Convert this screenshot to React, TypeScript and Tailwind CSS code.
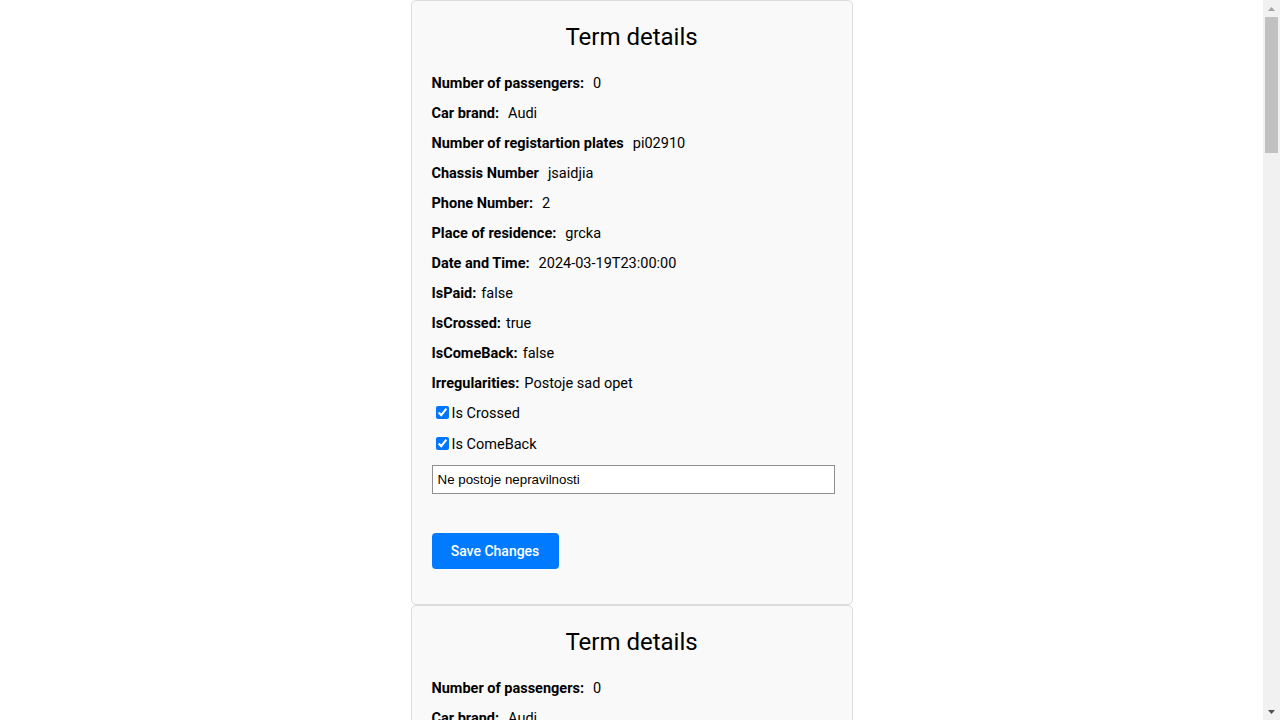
import React from 'react';

type Term = {
  passengers: number;
  brand: string;
  plates: string;
  chassis: string;
  phone: string;
  residence: string;
  dateTime: string;
  isPaid: boolean;
  isCrossed: boolean;
  isComeBack: boolean;
  irregularities: string;
};

const terms: Term[] = Array.from({ length: 8 }, () => ({
  passengers: 0,
  brand: 'Audi',
  plates: 'pi02910',
  chassis: 'jsaidjia',
  phone: '2',
  residence: 'grcka',
  dateTime: '2024-03-19T23:00:00',
  isPaid: false,
  isCrossed: true,
  isComeBack: false,
  irregularities: 'Postoje sad opet',
}));

function Row({ label, value, tight }: { label: string; value: string; tight?: boolean }) {
  return (
    <p className="flex items-center h-[20px] mt-[10px] first-of-type:mt-[21px] text-[14.5px] leading-[20px] whitespace-nowrap">
      <strong className="font-bold">{label}</strong>
      <span className={tight ? 'ml-[5px]' : 'ml-[9px]'}>{value}</span>
    </p>
  );
}

function TermCard({ term }: { term: Term }) {
  return (
    <div className="w-[442px] shrink-0 mx-auto flex flex-col items-start bg-[#f9f9f9] border border-[#dcdcdc] rounded-[5px] px-[20px] pt-[20px] pb-[35px]">
      <h2 className="self-stretch text-[24px] leading-[32px] text-center text-black">Term details</h2>
      <Row label="Number of passengers:" value={String(term.passengers)} />
      <Row label="Car brand:" value={term.brand} />
      <Row label="Number of registartion plates" value={term.plates} />
      <Row label="Chassis Number" value={term.chassis} />
      <Row label="Phone Number:" value={term.phone} />
      <Row label="Place of residence:" value={term.residence} />
      <Row label="Date and Time:" value={term.dateTime} />
      <Row label="IsPaid:" value={String(term.isPaid)} tight />
      <Row label="IsCrossed:" value={String(term.isCrossed)} tight />
      <Row label="IsComeBack:" value={String(term.isComeBack)} tight />
      <Row label="Irregularities:" value={term.irregularities} tight />
      <label className="flex items-center h-[20px] mt-[10px] text-[14.5px]">
        <input type="checkbox" defaultChecked className="w-[13px] h-[13px] ml-[4px] mr-[3px] -mt-[3px]" />
        Is Crossed
      </label>
      <label className="flex items-center h-[20px] mt-[11px] text-[14.5px]">
        <input type="checkbox" defaultChecked className="w-[13px] h-[13px] ml-[4px] mr-[3px] -mt-[3px]" />
        Is ComeBack
      </label>
      <input
        type="text"
        defaultValue="Ne postoje nepravilnosti"
        className="block w-[403px] h-[29px] mt-[10px] px-[5px] bg-white border border-[#8f8f8f] text-[13.33px] text-black outline-none"
        style={{ fontFamily: '"Liberation Sans", Arial, sans-serif' }}
      />
      <button className="mt-[39px] h-[36px] w-[127px] bg-[#007bff] text-white text-[14px] font-medium rounded-[4px]">
        Save Changes
      </button>
    </div>
  );
}

function Scrollbar() {
  return (
    <div className="w-[17px] shrink-0 h-full flex flex-col bg-[#f1f1f1]">
      <div className="h-[17px] flex items-center justify-center">
        <svg width="7" height="4" viewBox="0 0 7 4">
          <polygon points="3.5,0 7,4 0,4" fill="#a3a3a3" />
        </svg>
      </div>
      <div className="mx-[2px] h-[136px] bg-[#c1c1c1]" />
      <div className="flex-1" />
      <div className="h-[17px] flex items-center justify-center">
        <svg width="7" height="4" viewBox="0 0 7 4">
          <polygon points="0,0 7,0 3.5,4" fill="#505050" />
        </svg>
      </div>
    </div>
  );
}

export default function App() {
  return (
    <div className="h-screen flex bg-white text-black overflow-hidden" style={{ fontFamily: 'Roboto, "Noto Sans", sans-serif' }}>
      <div className="flex-1 flex flex-col overflow-hidden">
        {terms.map((t, i) => (
          <TermCard key={i} term={t} />
        ))}
      </div>
      <Scrollbar />
    </div>
  );
}
